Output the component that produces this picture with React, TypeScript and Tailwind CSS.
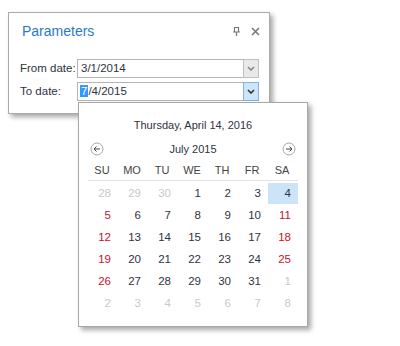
import React from "react";

const days = ["SU", "MO", "TU", "WE", "TH", "FR", "SA"];

// July 2015, week starting Sunday
const cells = (() => {
  const out: { d: number; cur: boolean }[] = [];
  [28, 29, 30].forEach((d) => out.push({ d, cur: false }));
  for (let d = 1; d <= 31; d++) out.push({ d, cur: true });
  for (let d = 1; out.length < 42; d++) out.push({ d, cur: false });
  return out;
})();

const Chevron = ({ color }: { color: string }) => (
  <svg width="8" height="5" viewBox="0 0 8 5">
    <path d="M1 1 L4 4 L7 1" fill="none" stroke={color} strokeWidth="1.6" />
  </svg>
);

const ArrowCircle = ({ dir }: { dir: "left" | "right" }) => (
  <svg width="14" height="14" viewBox="0 0 14 14">
    <circle cx="7" cy="7" r="6" fill="white" stroke="#a8a8a8" strokeWidth="1" />
    {dir === "left" ? (
      <path d="M10 7 H4 M6.5 4.5 L4 7 L6.5 9.5" fill="none" stroke="#444" strokeWidth="1" />
    ) : (
      <path d="M4 7 H10 M7.5 4.5 L10 7 L7.5 9.5" fill="none" stroke="#444" strokeWidth="1" />
    )}
  </svg>
);

const App = () => {
  return (
    <div className="relative w-[400px] h-[346px] bg-white pl-[8px] pt-[12px] font-['Liberation_Sans',Arial,sans-serif] text-[#2f3340]">
      <div className="w-[262px] h-[102px] border border-[#aaaaaa] bg-white shadow-[3px_3px_5px_rgba(0,0,0,0.35)]">
        <div className="flex items-center justify-between pl-[13px] pr-[9px] pt-[5px] h-[32px]">
          <span className="text-[14px] text-[#2b79cc]">Parameters</span>
          <div className="flex items-center gap-[11px]">
            <svg width="7" height="9" viewBox="0 0 7 9">
              <path d="M1.5 0.5 H5.5 V5 H1.5 Z M0 5 H7 M3.5 5 V9" fill="none" stroke="#777" strokeWidth="1.2" />
            </svg>
            <svg width="9" height="9" viewBox="0 0 9 9">
              <path d="M1 1 L8 8 M8 1 L1 8" stroke="#777" strokeWidth="1.6" />
            </svg>
          </div>
        </div>
        <div className="flex flex-col gap-[4px] pl-[11px] pt-[14px] text-[11.5px]">
          <div className="flex items-center">
            <span className="w-[57px]">From date:</span>
            <div className="flex w-[182px] h-[19px] border border-[#b4b4b4]">
              <span className="flex-1 pl-[3px] leading-[17px]">3/1/2014</span>
              <div className="w-[16px] -my-px -mr-px border border-[#c0c0c0] bg-[#e9e9e9] flex items-center justify-center">
                <Chevron color="#8a8a8a" />
              </div>
            </div>
          </div>
          <div className="flex items-center">
            <span className="w-[57px]">To date:</span>
            <div className="flex w-[182px] h-[19px] border border-[#b4b4b4]">
              <span className="flex-1 pl-[2px] leading-[17px]">
                <span className="bg-[#3399ff] text-white px-px">7</span>/4/2015
              </span>
              <div className="w-[16px] -my-px -mr-px border border-[#7eb4ea] bg-[#cde5f8] flex items-center justify-center">
                <Chevron color="#333" />
              </div>
            </div>
          </div>
        </div>
      </div>

      <div className="absolute left-[78px] top-[102px] w-[230px] h-[225px] border border-[#a8a8a8] bg-white shadow-[3px_3px_5px_rgba(0,0,0,0.35)] px-[9px] pt-[14px]">
        <div className="text-center text-[11px] leading-[16px]">Thursday, April 14, 2016</div>
        <div className="flex items-center justify-between mt-[8px] h-[16px] px-[2px]">
          <ArrowCircle dir="left" />
          <span className="text-[11px]">July 2015</span>
          <ArrowCircle dir="right" />
        </div>
        <div className="grid grid-cols-7 mt-[5px] h-[19px] border-b border-[#e3e3e3] text-[11px] text-[#444]">
          {days.map((d) => (
            <div key={d} className="text-center leading-[16px] pr-[2px]">
              {d}
            </div>
          ))}
        </div>
        <div className="grid grid-cols-7 mt-[2px] text-[11.5px]">
          {cells.map((c, i) => {
            const col = i % 7;
            const selected = c.cur && c.d === 4;
            const weekend = col === 0 || col === 6;
            let color = "text-[#2f3340]";
            if (!c.cur) color = "text-[#c8c8c8]";
            else if (weekend && !selected) color = "text-[#c8102e]";
            return (
              <div key={i} className="h-[22px] pb-px">
                <div
                  className={`h-[21px] leading-[21px] text-right pr-[7px] ${color} ${
                    selected ? "bg-[#cce4f7]" : ""
                  }`}
                >
                  {c.d}
                </div>
              </div>
            );
          })}
        </div>
      </div>
    </div>
  );
};

export default App;
